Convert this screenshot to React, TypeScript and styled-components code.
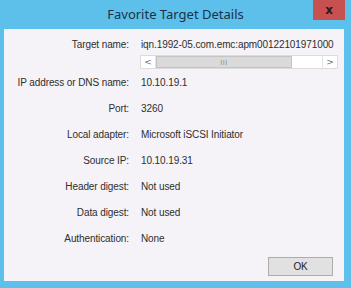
import React from 'react';
import styled, { createGlobalStyle } from 'styled-components';

const GlobalStyle = createGlobalStyle`
  html, body {
    margin: 0;
    padding: 0;
    background: #5cc0ea;
  }
`;

const Window = styled.div`
  width: 351px;
  height: 288px;
  background: #5cc0ea;
  display: flex;
  flex-direction: column;
  overflow: hidden;
`;

const TitleBar = styled.div`
  height: 29px;
  display: grid;
  grid-template-columns: 1fr auto 1fr;
  align-items: start;
`;

const Title = styled.div`
  grid-column: 2;
  padding-top: 5px;
  font-family: 'Noto Sans', 'Open Sans', sans-serif;
  font-size: 13px;
  line-height: 18px;
  color: #1b3049;
`;

const CloseButton = styled.div`
  grid-column: 3;
  justify-self: end;
  margin-right: 6px;
  width: 32px;
  height: 20px;
  background: #c75050;
  display: flex;
  align-items: center;
  justify-content: center;
  font-family: 'DejaVu Sans', sans-serif;
  font-weight: bold;
  font-size: 12px;
  line-height: 12px;
  color: #2b1b1b;
`;

const Panel = styled.div`
  margin: 0 7px 0 4px;
  height: 252px;
  background: #f5f3f7;
  display: flex;
  flex-direction: column;
  font-family: 'Liberation Sans', Arial, sans-serif;
  font-size: 10px;
  letter-spacing: -0.1px;
  color: #2e2e2e;
`;

const Row = styled.div<{ $h?: number; $top?: number }>`
  display: grid;
  grid-template-columns: 125px 1fr;
  column-gap: 12px;
  align-items: center;
  box-sizing: border-box;
  height: ${(p) => p.$h ?? 26}px;
  padding-top: ${(p) => p.$top ?? 0}px;
`;

const Label = styled.div`
  text-align: right;
  white-space: nowrap;
`;

const Value = styled.div`
  white-space: nowrap;
  overflow: hidden;
`;

const ScrollBar = styled.div`
  margin-left: 136px;
  width: 198px;
  height: 14px;
  box-sizing: border-box;
  border: 1px solid #dcdcdc;
  background: #ffffff;
  display: flex;
`;

const Arrow = styled.div<{ $side: 'left' | 'right' }>`
  width: 15px;
  box-sizing: border-box;
  ${(p) => (p.$side === 'left' ? 'border-right' : 'border-left')}: 1px solid #e4e4e4;
  display: flex;
  align-items: center;
  justify-content: center;
  color: #6f6f6f;
  font-size: 9px;
  font-family: 'DejaVu Sans', sans-serif;
`;

const Thumb = styled.div`
  width: 136px;
  box-sizing: border-box;
  border: 1px solid #c4c4c4;
  background: #dadada;
  display: flex;
  align-items: center;
  justify-content: center;
  color: #8a8a8a;
  font-size: 7px;
  letter-spacing: 0.5px;
`;

const Track = styled.div`
  flex: 1;
`;

const Footer = styled.div`
  margin-top: auto;
  padding: 0 11px 5px 0;
  display: flex;
  justify-content: flex-end;
`;

const Button = styled.div`
  width: 65px;
  height: 19px;
  box-sizing: border-box;
  border: 1px solid #acacac;
  background: #e1e1e1;
  display: flex;
  align-items: center;
  justify-content: center;
  color: #222;
`;

const rows: [string, string][] = [
  ['IP address or DNS name:', '10.10.19.1'],
  ['Port:', '3260'],
  ['Local adapter:', 'Microsoft iSCSI Initiator'],
  ['Source IP:', '10.10.19.31'],
  ['Header digest:', 'Not used'],
  ['Data digest:', 'Not used'],
  ['Authentication:', 'None'],
];

export default function App() {
  return (
    <Window>
      <GlobalStyle />
      <TitleBar>
        <Title>Favorite Target Details</Title>
        <CloseButton>x</CloseButton>
      </TitleBar>
      <Panel>
        <Row $h={26} $top={4}>
          <Label>Target name:</Label>
          <Value>iqn.1992-05.com.emc:apm00122101971000</Value>
        </Row>
        <ScrollBar>
          <Arrow $side="left">&lt;</Arrow>
          <Thumb>III</Thumb>
          <Track />
          <Arrow $side="right">&gt;</Arrow>
        </ScrollBar>
        {rows.map(([l, v]) => (
          <Row key={l}>
            <Label>{l}</Label>
            <Value>{v}</Value>
          </Row>
        ))}
        <Footer>
          <Button>OK</Button>
        </Footer>
      </Panel>
    </Window>
  );
}
